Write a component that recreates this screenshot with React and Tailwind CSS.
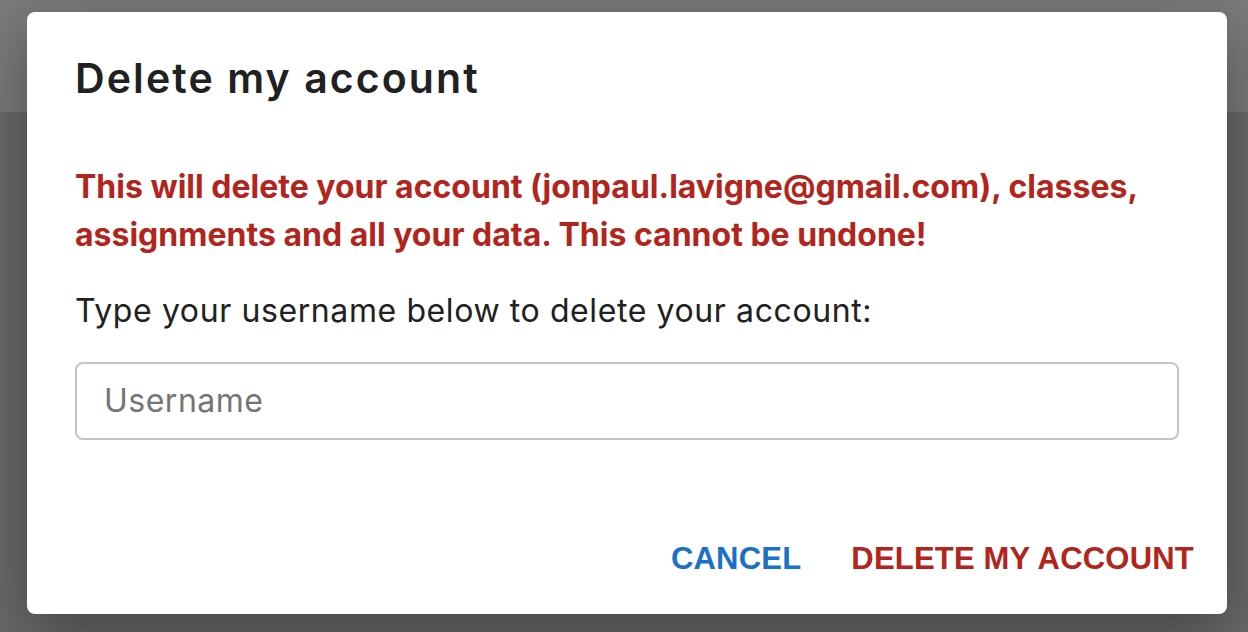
import React from "react";

export default function App() {
  const body = { fontFamily: "'Inter', 'Open Sans', sans-serif" };
  const btn = { fontFamily: "'Liberation Sans', Arial, sans-serif" };
  return (
    <div className="relative w-full h-[632px] overflow-hidden flex flex-col">
      <div className="h-[112px] bg-[#7a7a7a]" />
      <div className="flex-1 bg-[#696969]" />
      <div
        className="absolute left-[27px] top-[12px] w-[1200px] h-[602px] bg-white rounded-[8px] shadow-[0_20px_60px_rgba(0,0,0,0.35)] flex flex-col"
        style={body}
      >
        <div className="px-[48px] pt-[34px]">
          <h2 className="text-[41px] leading-[64px] h-[64px] font-semibold tracking-[2.1px] text-[#212121]">
            Delete my account
          </h2>
        </div>
        <div className="px-[48px] pt-[53px] flex flex-col">
          <p className="text-[32px] leading-[48px] font-bold text-[#b1251d]">
            This will delete your account (jonpaul.lavigne@gmail.com), classes,
            assignments and all your data. This cannot be undone!
          </p>
          <p className="mt-[28px] text-[32px] leading-[48px] tracking-[0.6px] text-[#212121]">
            Type your username below to delete your account:
          </p>
          <div className="mt-[27px] h-[78px] border-2 border-[#c4c4c4] rounded-[8px] flex items-center px-[27px]">
            <span className="text-[32px] tracking-[0.5px] text-[#757575]">Username</span>
          </div>
        </div>
        <div className="mt-auto flex justify-end items-center gap-[18px] pr-[17px] pb-[19px]" style={btn}>
          <button className="h-[72px] px-[16px] text-[31px] font-bold tracking-[0.2px] text-[#1b70c8]">
            CANCEL
          </button>
          <button className="h-[72px] px-[16px] text-[31px] font-bold tracking-[0.2px] text-[#b1251d]">
            DELETE MY ACCOUNT
          </button>
        </div>
      </div>
    </div>
  );
}
